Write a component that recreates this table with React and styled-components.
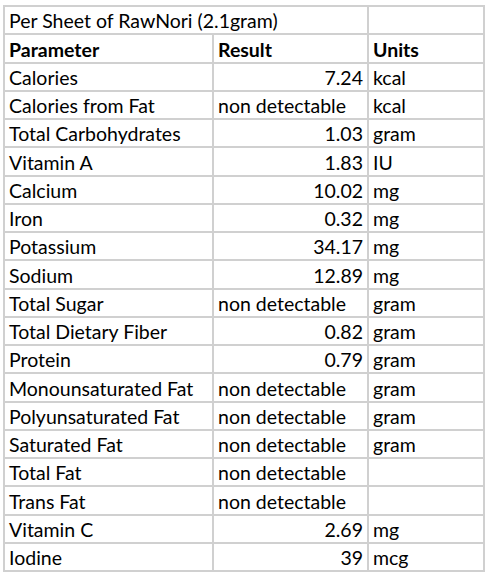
import React from 'react';
import styled, { createGlobalStyle } from 'styled-components';

const rows = [
  ['Calories', '7.24', 'kcal'],
  ['Calories from Fat', 'non detectable', 'kcal'],
  ['Total Carbohydrates', '1.03', 'gram'],
  ['Vitamin A', '1.83', 'IU'],
  ['Calcium', '10.02', 'mg'],
  ['Iron', '0.32', 'mg'],
  ['Potassium', '34.17', 'mg'],
  ['Sodium', '12.89', 'mg'],
  ['Total Sugar', 'non detectable', 'gram'],
  ['Total Dietary Fiber', '0.82', 'gram'],
  ['Protein', '0.79', 'gram'],
  ['Monounsaturated Fat', 'non detectable', 'gram'],
  ['Polyunsaturated Fat', 'non detectable', 'gram'],
  ['Saturated Fat', 'non detectable', 'gram'],
  ['Total Fat', 'non detectable', ''],
  ['Trans Fat', 'non detectable', ''],
  ['Vitamin C', '2.69', 'mg'],
  ['Iodine', '39', 'mcg'],
];

const GlobalStyle = createGlobalStyle`
  body {
    margin: 0;
    background: #fff;
    font-family: Lato, "Open Sans", sans-serif;
    color: #000;
  }
`;

const Sheet = styled.div`
  display: grid;
  grid-template-columns: 207px 153px 114px;
  grid-auto-rows: 26.25px;
  gap: 2px;
  padding: 2px;
  background: #d0d0d0;
  width: max-content;
  margin: 5px 0 0 3px;
`;

const Cell = styled.div`
  background: #fff;
  display: flex;
  align-items: flex-end;
  justify-content: ${p => (p.right ? 'flex-end' : 'flex-start')};
  padding: 0 ${p => (p.right ? '4px' : '0')} 0 ${p => (p.right ? '0' : p.indent || '4px')};
  grid-column: ${p => (p.span ? `span ${p.span}` : 'auto')};
  font-size: 19.5px;
  line-height: 24px;
  font-weight: ${p => (p.bold ? 700 : 400)};
  white-space: nowrap;
  overflow: hidden;
`;

const isNumber = v => /^[0-9.]+$/.test(v);

export default function App() {
  return (
    <>
      <GlobalStyle />
      <Sheet>
        <Cell span={2}>Per Sheet of RawNori (2.1gram)</Cell>
        <Cell />
        <Cell bold>Parameter</Cell>
        <Cell bold>Result</Cell>
        <Cell bold>Units</Cell>
        {rows.map(([name, result, unit]) => (
          <React.Fragment key={name}>
            <Cell>{name}</Cell>
            <Cell right={isNumber(result)}>{result}</Cell>
            <Cell indent="4px">{unit}</Cell>
          </React.Fragment>
        ))}
      </Sheet>
    </>
  );
}
